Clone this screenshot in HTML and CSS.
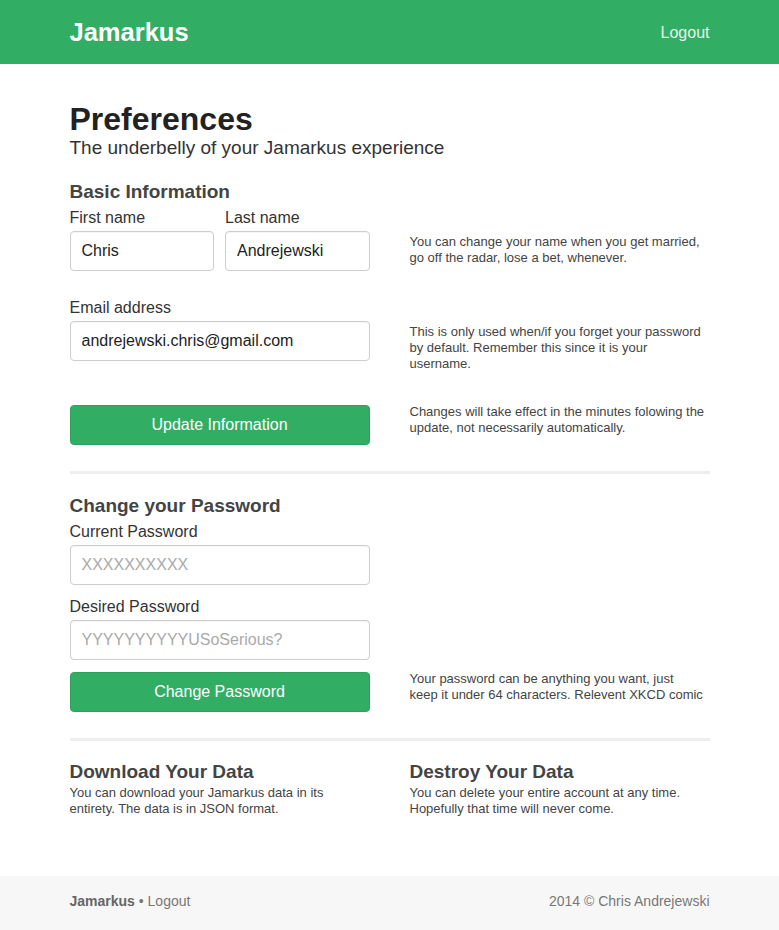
FILE: index.html
```html
<!DOCTYPE html>
<html lang="en">
<head>
<meta charset="utf-8">
<title>Preferences - Jamarkus</title>
<link rel="stylesheet" href="styles.css">
</head>
<body>
<header class="topbar">
  <div class="container topbar-inner">
    <a class="brand" href="#">Jamarkus</a>
    <a class="topbar-link" href="#">Logout</a>
  </div>
</header>

<main class="container main">
  <h1 class="title">Preferences</h1>
  <p class="subtitle">The underbelly of your Jamarkus experience</p>

  <section class="section">
    <h2 class="section-title">Basic Information</h2>

    <div class="row">
      <div class="name-grid">
        <div class="field">
          <label class="label">First name</label>
          <input class="input" type="text" value="Chris">
        </div>
        <div class="field">
          <label class="label">Last name</label>
          <input class="input" type="text" value="Andrejewski">
        </div>
      </div>
      <p class="help help-field">You can change your name when you get married,<br>go off the radar, lose a bet, whenever.</p>
    </div>

    <div class="row row-email">
      <div class="field">
        <label class="label">Email address</label>
        <input class="input" type="text" value="andrejewski.chris@gmail.com">
      </div>
      <p class="help help-field">This is only used when/if you forget your password<br>by default. Remember this since it is your<br>username.</p>
    </div>

    <div class="row row-button">
      <button class="btn" type="button">Update Information</button>
      <p class="help help-button">Changes will take effect in the minutes folowing the<br>update, not necessarily automatically.</p>
    </div>
  </section>

  <hr class="divider">

  <section class="section">
    <h2 class="section-title">Change your Password</h2>
    <div class="row">
      <div class="field">
        <label class="label">Current Password</label>
        <input class="input" type="password" placeholder="XXXXXXXXXX">
      </div>
    </div>
    <div class="row row-tight">
      <div class="field">
        <label class="label">Desired Password</label>
        <input class="input" type="password" placeholder="YYYYYYYYYYUSoSerious?">
      </div>
    </div>
    <div class="row row-tight-btn">
      <button class="btn" type="button">Change Password</button>
      <p class="help help-button">Your password can be anything you want, just<br>keep it under 64 characters. Relevent XKCD comic</p>
    </div>
  </section>

  <hr class="divider">

  <section class="data-grid">
    <div class="data-col">
      <h2 class="section-title">Download Your Data</h2>
      <p class="data-text">You can download your Jamarkus data in its<br>entirety. The data is in JSON format.</p>
    </div>
    <div class="data-col">
      <h2 class="section-title">Destroy Your Data</h2>
      <p class="data-text">You can delete your entire account at any time.<br>Hopefully that time will never come.</p>
    </div>
  </section>
</main>

<footer class="footer">
  <div class="container footer-inner">
    <div><a class="footer-brand" href="#">Jamarkus</a> &bull; <a class="footer-link" href="#">Logout</a></div>
    <div>2014 &copy; Chris Andrejewski</div>
  </div>
</footer>
</body>
</html>
```

FILE: styles.css
```css
* { box-sizing: border-box; }

html, body {
  margin: 0;
  padding: 0;
}

body {
  font-family: "Liberation Sans", Arial, Helvetica, sans-serif;
  color: #333;
  background: #fff;
}

a { text-decoration: none; color: inherit; }

.container {
  width: 640px;
  margin: 0 auto;
}

/* Top bar */
.topbar {
  background: #32ae64;
  height: 64px;
}
.topbar-inner {
  display: flex;
  justify-content: space-between;
  align-items: center;
  height: 64px;
}
.brand {
  color: #fff;
  font-weight: bold;
  font-size: 25.5px;
  line-height: 30px;
  margin-top: 0;
}
.topbar-link {
  color: #e3f5ea;
  font-size: 16px;
  line-height: 20px;
  margin-top: 2px;
}

/* Main */
.main {
  padding-top: 37px;
  padding-bottom: 59px;
}
.title {
  margin: 0;
  font-size: 32px;
  line-height: 36px;
  font-weight: bold;
  color: #222;
}
.subtitle {
  margin: 0;
  font-size: 19px;
  line-height: 22px;
  color: #333;
}

.section { margin: 0; }

.section-title {
  margin: 0;
  font-size: 19px;
  line-height: 22px;
  font-weight: bold;
  color: #444;
}
.subtitle + .section { margin-top: 22px; }

.row {
  display: grid;
  grid-template-columns: 300px 300px;
  column-gap: 40px;
  align-items: start;
  margin-top: 5px;
}
.row-email { margin-top: 27px; }
.row-button { margin-top: 33px; }
.row-tight { margin-top: 12px; }
.row-tight-btn { margin-top: 12px; }

.name-grid {
  display: grid;
  grid-template-columns: 1fr 1fr;
  column-gap: 11px;
}

.field { display: flex; flex-direction: column; }

.label {
  display: block;
  font-size: 16px;
  line-height: 20px;
  margin-bottom: 3px;
  color: #333;
}

.input {
  display: block;
  width: 100%;
  height: 40px;
  padding: 0 11px;
  border: 1px solid #ccc;
  border-radius: 4px;
  font-family: inherit;
  font-size: 16px;
  color: #222;
  background: #fff;
  box-shadow: inset 0 1px 1px rgba(0,0,0,0.04);
}
.input::placeholder { color: #aaa; }

.btn {
  display: block;
  width: 100%;
  height: 40px;
  border: 1px solid #2ba15b;
  border-radius: 4px;
  background: #32ae64;
  color: #fff;
  font-family: inherit;
  font-size: 16px;
  text-align: center;
  padding: 0;
}

.help {
  margin: 0;
  font-size: 13px;
  line-height: 16px;
  color: #444;
}
.help-field { padding-top: 26px; }
.help-button { padding-top: 0; margin-top: -1px; }

.divider {
  border: 0;
  height: 3px;
  background: #eee;
  margin: 26px 0 0;
}
.divider + .section { margin-top: 21px; }

.data-grid {
  display: grid;
  grid-template-columns: 300px 300px;
  column-gap: 40px;
  margin-top: 20px;
}
.data-text {
  margin: 2px 0 0;
  font-size: 13px;
  line-height: 16px;
  color: #444;
}

/* Footer */
.footer {
  background: #f7f7f7;
  padding: 15px 0 19px;
}
.footer-inner {
  display: flex;
  justify-content: space-between;
  font-size: 14px;
  line-height: 20px;
  color: #777;
}
.footer-brand { font-weight: bold; color: #666; }
.footer-link { color: #777; }
```
